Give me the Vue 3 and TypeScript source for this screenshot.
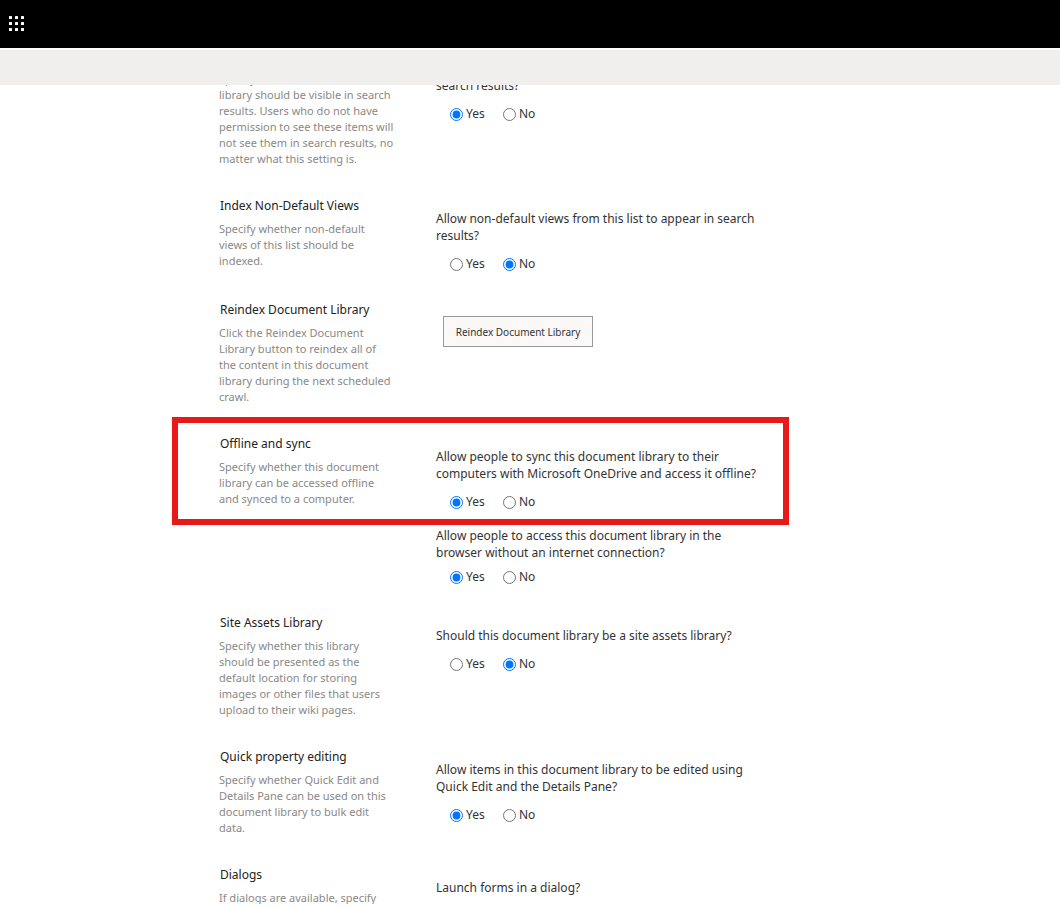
<script setup lang="ts">
import { reactive } from 'vue'

type Answer = 'Yes' | 'No'

interface Question {
  id: string
  lines: string[]
  answer?: Answer
}

interface Section {
  title: string
  description: string[]
  questions: Question[]
  button?: string
  highlighted?: boolean
}

const sections = reactive<Section[]>([
  {
    title: 'Search',
    description: [
      'Specify whether this document',
      'library should be visible in search',
      'results. Users who do not have',
      'permission to see these items will',
      'not see them in search results, no',
      'matter what this setting is.',
    ],
    questions: [
      {
        id: 'search',
        lines: ['Allow items from this document library to appear in', 'search results?'],
        answer: 'Yes',
      },
    ],
  },
  {
    title: 'Index Non-Default Views',
    description: ['Specify whether non-default', 'views of this list should be', 'indexed.'],
    questions: [
      {
        id: 'views',
        lines: ['Allow non-default views from this list to appear in search', 'results?'],
        answer: 'No',
      },
    ],
  },
  {
    title: 'Reindex Document Library',
    description: [
      'Click the Reindex Document',
      'Library button to reindex all of',
      'the content in this document',
      'library during the next scheduled',
      'crawl.',
    ],
    questions: [],
    button: 'Reindex Document Library',
  },
  {
    title: 'Offline and sync',
    description: [
      'Specify whether this document',
      'library can be accessed offline',
      'and synced to a computer.',
    ],
    highlighted: true,
    questions: [
      {
        id: 'sync',
        lines: [
          'Allow people to sync this document library to their',
          'computers with Microsoft OneDrive and access it offline?',
        ],
        answer: 'Yes',
      },
      {
        id: 'offline',
        lines: [
          'Allow people to access this document library in the',
          'browser without an internet connection?',
        ],
        answer: 'Yes',
      },
    ],
  },
  {
    title: 'Site Assets Library',
    description: [
      'Specify whether this library',
      'should be presented as the',
      'default location for storing',
      'images or other files that users',
      'upload to their wiki pages.',
    ],
    questions: [
      { id: 'assets', lines: ['Should this document library be a site assets library?'], answer: 'No' },
    ],
  },
  {
    title: 'Quick property editing',
    description: [
      'Specify whether Quick Edit and',
      'Details Pane can be used on this',
      'document library to bulk edit',
      'data.',
    ],
    questions: [
      {
        id: 'quick',
        lines: ['Allow items in this document library to be edited using', 'Quick Edit and the Details Pane?'],
        answer: 'Yes',
      },
    ],
  },
  {
    title: 'Dialogs',
    description: ['If dialogs are available, specify'],
    questions: [{ id: 'dialogs', lines: ['Launch forms in a dialog?'] }],
  },
])

const options: Answer[] = ['Yes', 'No']
const dots = [0, 6, 12]
</script>

<template>
  <div class="page">
    <header class="suite-bar">
      <button class="launcher" type="button" aria-label="App launcher">
        <svg width="15" height="15" viewBox="0 0 15 15" aria-hidden="true">
          <template v-for="y in dots" :key="y">
            <rect v-for="x in dots" :key="x" :x="x" :y="y" width="3" height="3" rx="0.6" fill="#fff" />
          </template>
        </svg>
      </button>
    </header>
    <div class="ribbon"></div>
    <main class="viewport">
      <form class="settings" @submit.prevent>
        <section v-for="s in sections" :key="s.title" class="section">
          <div class="info">
            <h2 class="title">{{ s.title }}</h2>
            <p class="description">{{ s.description.join('\n') }}</p>
          </div>
          <div class="fields">
            <fieldset v-for="q in s.questions" :key="q.id" class="question">
              <legend class="prompt">{{ q.lines.join('\n') }}</legend>
              <div v-if="q.answer" class="choices">
                <label v-for="o in options" :key="o" class="choice">
                  <input v-model="q.answer" type="radio" :name="q.id" :value="o" />
                  <span>{{ o }}</span>
                </label>
              </div>
            </fieldset>
            <button v-if="s.button" class="action" type="button">{{ s.button }}</button>
          </div>
          <div v-if="s.highlighted" class="highlight"></div>
        </section>
      </form>
    </main>
  </div>
</template>

<style>
body {
  margin: 0;
  background: #fff;
}
</style>

<style scoped>
.page {
  display: flex;
  flex-direction: column;
  box-sizing: border-box;
  height: 100vh;
  padding-bottom: 3px;
  font-family: 'Segoe UI', 'Noto Sans', 'Open Sans', sans-serif;
  font-size: 12px;
  color: #333;
}

.suite-bar {
  display: flex;
  flex: none;
  height: 48px;
  background: #000;
}

.launcher {
  display: flex;
  align-items: center;
  padding: 0 9px 1px;
  border: 0;
  background: none;
}

.ribbon {
  flex: none;
  height: 35px;
  margin-top: 2px;
  background: #f0efed;
}

.viewport {
  flex: 1;
  min-height: 0;
  overflow: hidden;
}

.settings {
  margin: -39px 24px 0 219px;
}

.section {
  position: relative;
  display: grid;
  grid-template-columns: 217px minmax(0, 1fr);
}

.info {
  padding-bottom: 29px;
}

.title {
  margin: 0 0 5px 1px;
  font-size: 12px;
  font-weight: 400;
  line-height: 20px;
  color: #222;
}

.description {
  margin: 0;
  font-size: 11px;
  line-height: 16px;
  color: #8a8886;
  white-space: pre;
}

.fields {
  padding: 14px 0 27px;
}

.question {
  min-width: 0;
  margin: 0;
  padding: 0;
  border: 0;
}

.question + .question {
  margin-top: 16px;
}

.prompt {
  padding: 0;
  line-height: 17px;
  white-space: pre;
}

.choices {
  display: flex;
  padding: 11px 0 0 14px;
}

.question + .question .choices {
  padding-top: 7px;
}

.choice {
  display: flex;
  align-items: center;
  gap: 3px;
  min-width: 53px;
  line-height: 18px;
}

.choice input {
  width: 13px;
  height: 13px;
  margin: 1px 0 0;
}

.action {
  min-width: 150px;
  height: 31px;
  margin: 2px 0 0 7px;
  padding: 0 10px;
  border: 1px solid #999;
  background: #faf9f8;
  color: #333;
  font-family: inherit;
  font-size: 10px;
}

.highlight {
  position: absolute;
  top: -17px;
  left: -47px;
  box-sizing: border-box;
  width: 617px;
  height: 108px;
  border: 6px solid #e8191b;
  pointer-events: none;
}
</style>
